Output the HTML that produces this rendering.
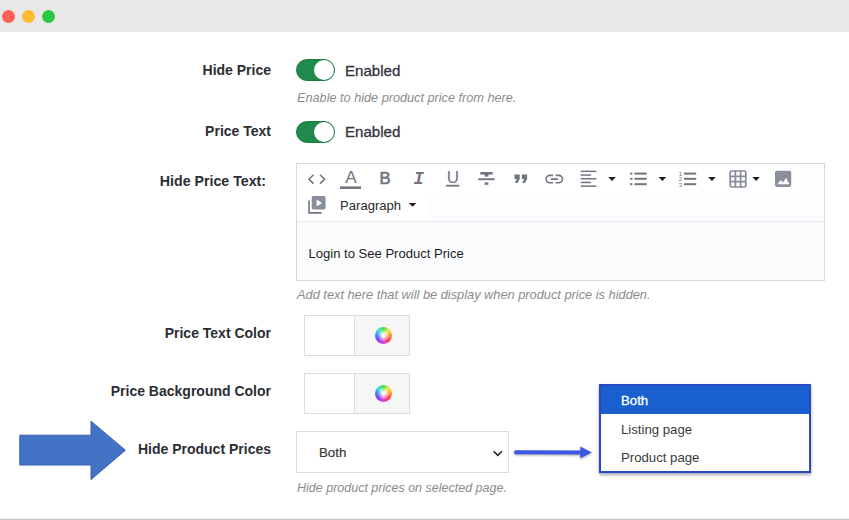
<!DOCTYPE html>
<html><head><meta charset="utf-8">
<style>
html,body{margin:0;padding:0;}
body{width:849px;height:520px;position:relative;overflow:hidden;background:#fff;font-family:"Liberation Sans",sans-serif;color:#313440;}
.abs{position:absolute;}
.titlebar{left:0;top:0;width:849px;height:32px;background:#e8e8e8;}
.dot{width:13.2px;height:13.2px;border-radius:50%;top:10.2px;}
.label{font-weight:bold;font-size:14px;color:#2b2e33;text-align:right;width:271px;left:0;white-space:nowrap;line-height:16px;}
.help{font-style:italic;font-size:12.4px;color:#8c8c8c;left:298px;white-space:nowrap;line-height:14px;}
.toggle{left:296px;width:37px;height:20px;border-radius:11px;background:#208a4e;border:1px solid #1b7a43;}
.toggle i{position:absolute;right:0;top:0;width:20px;height:20px;border-radius:50%;background:#fff;}
.en{left:345px;font-size:15.1px;color:#313440;line-height:16px;-webkit-text-stroke:0.3px #313440;}
.swatch{left:304px;width:104px;height:39px;border:1px solid #dcdcdc;background:#fff;}
.swatch .r{position:absolute;left:49px;top:0;width:54px;height:39px;background:#f6f6f6;border-left:1px solid #dcdcdc;}
.wheel{position:absolute;left:20px;top:11px;width:17px;height:17px;border-radius:50%;background:conic-gradient(#4be04b,#f5e642 45deg,#ff8a2a 90deg,#ff3b5c 135deg,#e23bd6 180deg,#8a3bff 225deg,#3b7bff 270deg,#3be0e0 315deg,#4be04b 360deg);}
.wheel:after{content:"";position:absolute;left:2px;top:2px;width:13px;height:13px;border-radius:50%;background:radial-gradient(#fff 10%,rgba(255,255,255,0) 70%);}
</style></head><body>
<div class="abs titlebar"></div>
<div class="abs dot" style="left:1.5px;background:#fe5f57;"></div>
<div class="abs dot" style="left:21.5px;background:#febc2e;"></div>
<div class="abs dot" style="left:41.5px;background:#28c840;"></div>

<div class="abs label" style="top:62px;">Hide Price</div>
<div class="abs toggle" style="top:59px;"><i></i></div>
<div class="abs en" style="top:62.5px;">Enabled</div>
<div class="abs help" style="top:90.7px;left:297px;font-size:12.7px;">Enable to hide product price from here.</div>

<div class="abs label" style="top:123px;">Price Text</div>
<div class="abs toggle" style="top:120.5px;"><i></i></div>
<div class="abs en" style="top:124px;">Enabled</div>

<div class="abs label" style="top:173px;width:266px;font-size:14.2px;">Hide Price Text:</div>

<div class="abs" style="left:296px;top:163px;width:527px;height:116px;border:1px solid #d6d9dc;background:#fafbfd;box-sizing:content-box;">
  <div class="abs" style="left:0;top:0;width:527px;height:57px;background:#fcfdfe;"></div>
  <div class="abs" style="left:0;top:0;width:504px;height:30px;background:#fff;"></div>
  <div class="abs" style="left:0;top:30px;width:131px;height:27px;background:#fff;"></div>
  <div class="abs" style="left:0;top:57px;width:527px;height:1px;background:#e6e9ee;"></div>
  <div class="abs" style="left:11.5px;top:81.5px;font-size:13.05px;color:#1d1d1d;line-height:15px;">Login to See Product Price</div>
  <div class="abs" style="left:43px;top:34px;font-size:13.1px;color:#2a2a2a;line-height:15px;">Paragraph</div>
</div>

<svg class="abs" style="left:0;top:0;" width="849" height="520" viewBox="0 0 849 520" font-family="Liberation Sans, sans-serif">
 <g fill="none" stroke="#70757f" stroke-width="1.6">
  <polyline points="313.5,174.8 309,179.2 313.5,183.6"/>
  <polyline points="320,174.8 324.5,179.2 320,183.6"/>
  <path d="M553 175.4h-3.2a3.7 3.7 0 0 0 0 7.4h3.2M555.6 175.4h3.2a3.7 3.7 0 0 1 0 7.4h-3.2M550.7 179.1h7.2"/>
  <g stroke="#868b97" stroke-width="1.7"><rect x="730.2" y="171" width="15.6" height="16" rx="1.5"/>
  <path d="M735.4 171v16M740.6 171v16M730.2 176.3h15.6M730.2 181.7h15.6"/></g>
  <path d="M309 200.4v12.5h12.6"/>
 </g>
 <g fill="#70757f">
  <text x="351" y="183" font-size="17.2" text-anchor="middle">A</text>
  <rect x="340" y="186.4" width="21" height="2.6"/>
  <text x="385" y="184.4" font-size="16.6" text-anchor="middle" stroke="#70757f" stroke-width="0.7">B</text>
  <text x="418.8" y="184.4" font-size="17.5" font-weight="bold" font-style="italic" text-anchor="middle" font-family="Liberation Mono, monospace">I</text>
  <text x="452.8" y="183" font-size="17" text-anchor="middle">U</text>
  <rect x="446" y="184.8" width="13.4" height="1.8"/>
  <rect x="480.3" y="172" width="12.4" height="2.6"/>
  <rect x="484.6" y="174" width="3.8" height="2.6"/>
  <rect x="478.3" y="178.3" width="16.3" height="1.9"/>
  <rect x="484.6" y="182.4" width="3.8" height="2.4"/>
  <path d="M514.5 174.6h5.2v4.4l-2.2 4h-2.7l1.9-4h-2.2z"/>
  <path d="M521.9 174.6h5.2v4.4l-2.2 4h-2.7l1.9-4h-2.2z"/>
  <rect x="580.7" y="170.6" width="15.7" height="1.5"/>
  <rect x="580.7" y="174.3" width="10.4" height="1.5"/>
  <rect x="580.7" y="178" width="15.7" height="1.5"/>
  <rect x="580.7" y="181.7" width="10.4" height="1.5"/>
  <rect x="580.7" y="185.4" width="15.7" height="1.5"/>
  <rect x="630.2" y="172.6" width="2.2" height="2"/>
  <rect x="630.2" y="177.8" width="2.2" height="2"/>
  <rect x="630.2" y="183.2" width="2.2" height="2"/>
  <rect x="634.5" y="172.6" width="12.2" height="2"/>
  <rect x="634.5" y="177.8" width="12.2" height="2"/>
  <rect x="634.5" y="183.2" width="12.2" height="2"/>
  <text x="678.8" y="176" font-size="6">1</text>
  <text x="678.8" y="181.3" font-size="6">2</text>
  <text x="678.8" y="186.7" font-size="6">3</text>
  <rect x="684" y="172.6" width="12.2" height="2"/>
  <rect x="684" y="177.8" width="12.2" height="2"/>
  <rect x="684" y="183.2" width="12.2" height="2"/>
 </g>
 <g fill="#8a8f9c">
  <rect x="775" y="170.7" width="16.2" height="16.2" rx="1.8"/>
  <rect x="311.7" y="196" width="13.9" height="13.4" rx="1.6"/>
 </g>
 <g fill="#fff">
  <polygon points="777.4,184.2 780.8,180 783,182.6 786,177.8 789.4,184.2"/>
  <polygon points="316.6,199.4 316.6,206.6 322,203"/>
 </g>
 <g fill="#1c1c1c">
  <polygon points="608.3,177 615.8,177 612.05,181"/>
  <polygon points="658.7,177 666.2,177 662.45,181"/>
  <polygon points="708.2,177 715.7,177 711.95,181"/>
  <polygon points="752.4,177 759.8,177 756.1,181"/>
  <polygon points="408.8,203 416.3,203 412.55,206.8"/>
 </g>
</svg>

<div class="abs help" style="top:288px;left:297px;font-size:12.8px;">Add text here that will be display when product price is hidden.</div>

<div class="abs label" style="top:325px;">Price Text Color</div>
<div class="abs swatch" style="top:315px;"><div class="r"><div class="wheel"></div></div></div>

<div class="abs label" style="top:383px;">Price Background Color</div>
<div class="abs swatch" style="top:373px;"><div class="r"><div class="wheel"></div></div></div>

<svg class="abs" style="left:0;top:410px;" width="140" height="80" viewBox="0 410 140 80"><polygon points="19.8,435.2 91,435.2 91,421.2 125.4,450.2 91,479.6 91,465 19.8,465" fill="#4472c4" stroke="#3560ad" stroke-width="1"/></svg>

<div class="abs label" style="top:441px;">Hide Product Prices</div>
<div class="abs" style="left:296px;top:431px;width:211px;height:40px;border:1px solid #dcdcdc;background:#fff;">
  <div class="abs" style="left:22px;top:13px;font-size:13.3px;color:#3a3a3a;line-height:15px;-webkit-text-stroke:0.2px #3a3a3a;">Both</div>
  <svg class="abs" style="left:190px;top:14px;" width="20" height="14" viewBox="487 445 20 14"><path d="M493.6 450.2 L497.8 454.4 L502 450.2" fill="none" stroke="#222" stroke-width="1.5"/></svg>
</div>
<div class="abs help" style="top:481px;left:297px;font-size:12.5px;">Hide product prices on selected page.</div>

<svg class="abs" style="left:505px;top:436px;filter:drop-shadow(0 1px 1px rgba(0,0,0,.35));" width="95" height="32" viewBox="505 436 95 32"><path d="M516 452.2 L582 452.5" stroke="#3b57e6" stroke-width="4" stroke-linecap="round"/><polygon points="580.4,446.5 591.8,452.4 580.4,458.2" fill="#3b57e6"/></svg>

<div class="abs" style="left:599px;top:384px;width:208px;height:85px;border:2px solid #2b48c0;background:#fff;box-shadow:0 2px 3px rgba(60,60,80,.45);">
  <div class="abs" style="left:0;top:0;width:208px;height:28px;background:#1a5fd0;"></div>
  <div class="abs" style="left:20px;top:7.3px;font-size:13.2px;color:#fff;line-height:15px;-webkit-text-stroke:0.3px #fff;">Both</div>
  <div class="abs" style="left:20px;top:36px;font-size:13.2px;color:#3a3a3a;line-height:15px;">Listing page</div>
  <div class="abs" style="left:20px;top:64px;font-size:13.2px;color:#3a3a3a;line-height:15px;">Product page</div>
</div>

<div class="abs" style="left:0;top:518px;width:849px;height:1px;background:#efefef;"></div><div class="abs" style="left:0;top:519px;width:849px;height:1px;background:#c6c6c6;"></div>
</body></html>
